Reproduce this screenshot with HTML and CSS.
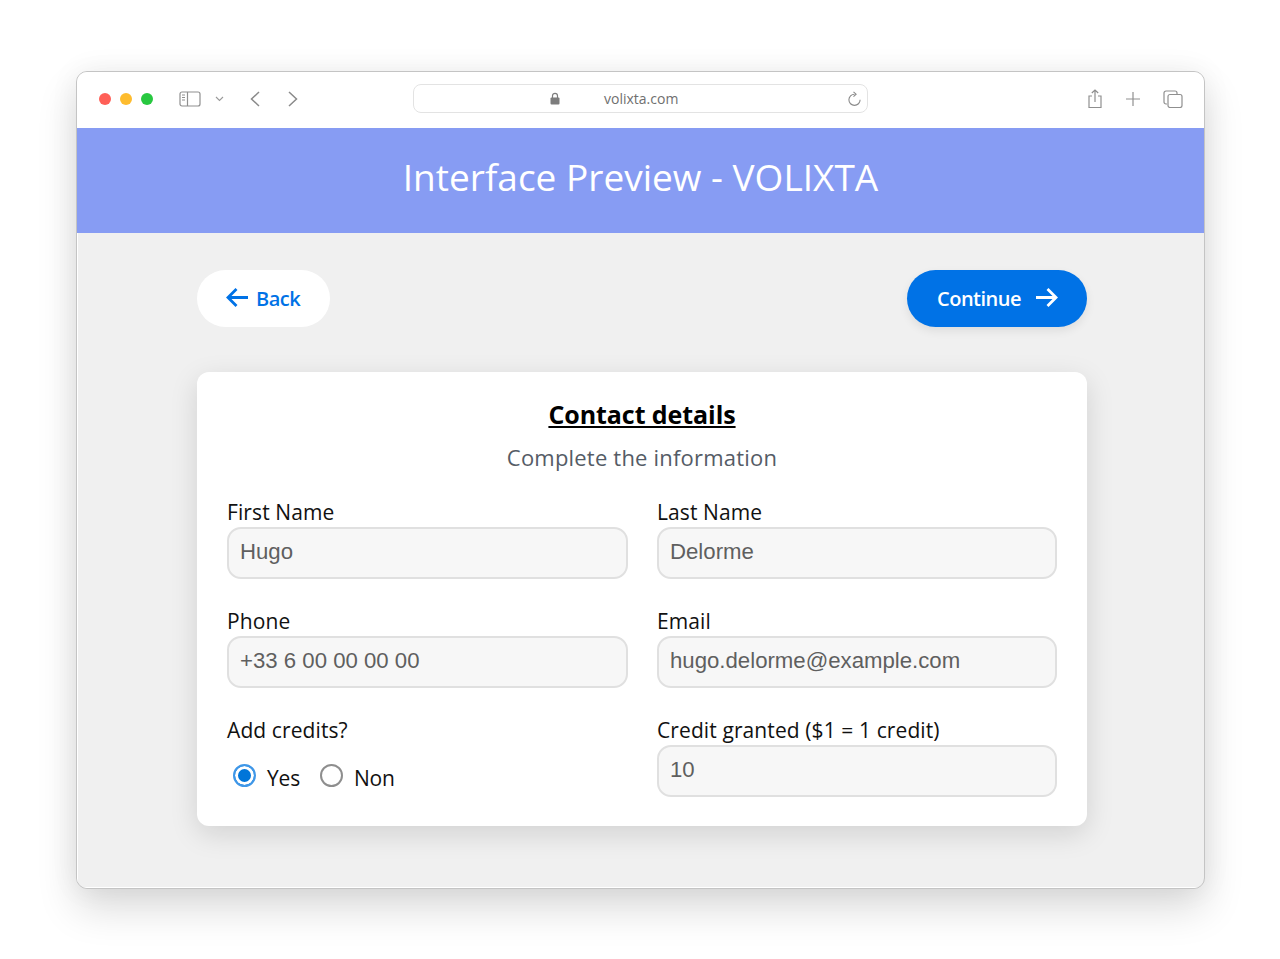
FILE: index.html
```html
<!DOCTYPE html>
<html lang="en">
<head>
<meta charset="utf-8">
<title>Interface Preview - VOLIXTA</title>
<link rel="stylesheet" href="styles.css">
</head>
<body>
<div class="window">
  <div class="toolbar">
    <div class="lights"><span class="light red"></span><span class="light yellow"></span><span class="light green"></span></div>
    <svg class="tb-sidebar" width="22" height="16" viewBox="0 0 22 16" fill="none" stroke="#8f8f8f" stroke-width="1.2"><rect x="1" y="1" width="20" height="14" rx="2"/><path d="M8.5 1v14"/><path d="M3 4h3M3 6.500h3M3 9h3" stroke-width="1"/></svg>
    <svg class="tb-chev" width="9" height="6" viewBox="0 0 9 6" fill="none" stroke="#9a9a9a" stroke-width="1.1"><path d="M1 1l3.500 3.500L8 1"/></svg>
    <svg class="tb-back" width="10" height="16" viewBox="0 0 10 16" fill="none" stroke="#8a8a8a" stroke-width="1.5"><path d="M9 1L1.500 8 9 15"/></svg>
    <svg class="tb-fwd" width="10" height="16" viewBox="0 0 10 16" fill="none" stroke="#8a8a8a" stroke-width="1.5"><path d="M1 1l7.500 7L1 15"/></svg>
    <div class="address">
      <svg class="lock" width="10" height="13" viewBox="0 0 10 13"><path d="M2.500 6V3.800a2.500 2.500 0 0 1 5 0V6" fill="none" stroke="#7d7d7d" stroke-width="1.2"/><rect x="0.500" y="5.500" width="9" height="7" rx="1" fill="#7d7d7d"/></svg>
      <span class="url">volixta.com</span>
      <svg class="reload" width="15" height="16" viewBox="0 0 15 16" fill="none" stroke="#8a8a8a" stroke-width="1.1"><path d="M7.500 3.200a5.600 5.600 0 1 0 5.600 5.600"/><path d="M6.500 0.800l2.600 2.400-2.600 2.400"/></svg>
    </div>
    <div class="tb-right">
      <svg width="16" height="20" viewBox="0 0 16 20" fill="none" stroke="#8f8f8f" stroke-width="1.2"><path d="M5 7H2v11.500h12V7h-3"/><path d="M8 13V1M4.800 4L8 1l3.200 3"/></svg>
      <svg width="16" height="16" viewBox="0 0 16 16" fill="none" stroke="#8f8f8f" stroke-width="1.2"><path d="M8 1v14M1 8h14"/></svg>
      <svg width="20" height="18" viewBox="0 0 20 18" fill="none" stroke="#8f8f8f" stroke-width="1.2"><path d="M4 14H3a2 2 0 0 1-2-2V3a2 2 0 0 1 2-2h9a2 2 0 0 1 2 2v1"/><rect x="5" y="4.500" width="14" height="13" rx="2"/></svg>
    </div>
  </div>
  <header class="banner"><h1>Interface Preview - VOLIXTA</h1></header>
  <main class="content">
    <div class="actions">
      <a class="btn btn-back">
        <svg class="arrow" width="22" height="19" viewBox="0 0 22 19" fill="none" stroke="currentColor" stroke-width="2.800"><path d="M22 9.500H2M10.500 1L2 9.500l8.500 8.500"/></svg>
        Back
      </a>
      <a class="btn btn-next">
        Continue
        <svg class="arrow" width="22" height="19" viewBox="0 0 22 19" fill="none" stroke="currentColor" stroke-width="2.800"><path d="M0 9.500h20M11.500 1L20 9.500 11.500 18"/></svg>
      </a>
    </div>
    <section class="card">
      <h2>Contact details</h2>
      <p class="sub">Complete the information</p>
      <div class="grid">
        <div class="field"><label>First Name</label><div class="input">Hugo</div></div>
        <div class="field"><label>Last Name</label><div class="input">Delorme</div></div>
        <div class="field"><label>Phone</label><div class="input">+33 6 00 00 00 00</div></div>
        <div class="field"><label>Email</label><div class="input">hugo.delorme@example.com</div></div>
        <div class="field"><label>Add credits?</label>
          <div class="radios">
            <span class="radio on"></span><span class="radio-label">Yes</span>
            <span class="radio"></span><span class="radio-label">Non</span>
          </div>
        </div>
        <div class="field"><label>Credit granted ($1 = 1 credit)</label><div class="input">10</div></div>
      </div>
    </section>
  </main>
</div>
</body>
</html>
```
FILE: styles.css
```css
* { box-sizing: border-box; }
html, body { margin: 0; height: 100%; }
body {
  background: #fff;
  padding: 71px 75px 0 76px;
  overflow: hidden;
  font-family: "Open Sans", "Noto Sans", sans-serif;
}
.window {
  width: 1129px;
  height: 818px;
  background: #f0f0f0;
  border: 1px solid #c4c4c4;
  border-radius: 11px;
  overflow: hidden;
  box-shadow: 0 20px 40px rgba(0,0,0,.14), 0 0 30px rgba(0,0,0,.06);
  display: flex;
  flex-direction: column;
}
.toolbar {
  height: 56px;
  background: #fff;
  display: flex;
  align-items: center;
  padding: 0 0 3px 22px;
  flex: none;
}
.lights { display: flex; gap: 9px; }
.light { width: 12px; height: 12px; border-radius: 50%; }
.red { background: #ff5f57; }
.yellow { background: #febc2e; }
.green { background: #28c840; }
.tb-sidebar { margin-left: 26px; }
.tb-chev { margin-left: 14px; margin-top: 1px; }
.tb-back { margin-left: 26px; }
.tb-fwd { margin-left: 28px; }
.address {
  margin-left: 115px;
  width: 455px;
  height: 29px;
  border: 1px solid #e3e3e3;
  border-radius: 8px;
  display: flex;
  align-items: center;
  padding: 0 5px 0 136px;
}
.url { margin-left: 44px; font-size: 14px; color: #6f6f6f; flex: 1; }
.reload { flex: none; }
.tb-right {
  margin-left: 219px;
  display: flex;
  align-items: center;
  gap: 22px;
}
.banner {
  height: 105px;
  background: #879cf3;
  flex: none;
  display: flex;
  align-items: center;
  justify-content: center;
  padding-bottom: 9px;
}
.banner h1 {
  margin: 0;
  font-weight: 400;
  font-size: 37px;
  color: #fff;
}
.content {
  flex: 1;
  padding: 37px 117px 0 120px;
  box-shadow: inset 1px 0 0 #fff, inset 0 -1px 0 #fff;
}
.actions { display: flex; justify-content: space-between; height: 57px; }
.btn {
  height: 57px;
  border-radius: 29px;
  display: flex;
  align-items: center;
  gap: 8px;
  font-size: 20px;
  font-weight: 600;
  letter-spacing: -0.5px;
}
.arrow { margin-top: -2px; }
.btn-back { width: 133px; background: #fff; color: #0072e6; padding-left: 29px; }
.btn-next { width: 180px; background: #0072e6; color: #fff; padding-left: 30px; gap: 15px; box-shadow: 0 4px 10px rgba(0,0,0,.08); }
.card {
  margin-top: 45px;
  width: 890px;
  height: 454px;
  background: #fff;
  border-radius: 12px;
  box-shadow: 0 8px 28px rgba(0,0,0,.13);
  padding: 25px 30px 0 30px;
}
.card h2 {
  margin: 0;
  font-size: 25px;
  line-height: 34px;
  font-weight: 700;
  color: #000;
  text-align: center;
  text-decoration: underline;
  letter-spacing: -0.07px;
}
.sub {
  margin: 11px 0 0;
  font-size: 22px;
  line-height: 30px;
  color: #555c66;
  text-align: center;
  letter-spacing: 0.2px;
}
.grid {
  margin-top: 27px;
  display: grid;
  grid-template-columns: 401px 400px;
  column-gap: 29px;
  row-gap: 29px;
}
.field label {
  display: block;
  font-size: 21px;
  line-height: 27px;
  height: 28px;
  color: #111;
  letter-spacing: 0.1px;
}
.input {
  height: 52px;
  background: #f7f7f7;
  border: 2px solid #e0e0e0;
  border-radius: 14px;
  padding: 0 11px 2px;
  display: flex;
  align-items: center;
  font-family: "Liberation Sans", Arial, sans-serif;
  font-size: 22.2px;
  color: #5f5f5f;
}
.radios { display: flex; align-items: center; margin: 19px 0 0 6px; }
.radio {
  width: 23px;
  height: 23px;
  border-radius: 50%;
  border: 2px solid #8e8e8e;
  background: #fff;
  margin-top: -6px;
}
.radio.on { border-color: #3f97e8; background: #0075d9; box-shadow: inset 0 0 0 3px #fff; }
.radio-label { font-size: 21px; margin-left: 11px; margin-right: 20px; color: #111; letter-spacing: -0.2px; }
```
